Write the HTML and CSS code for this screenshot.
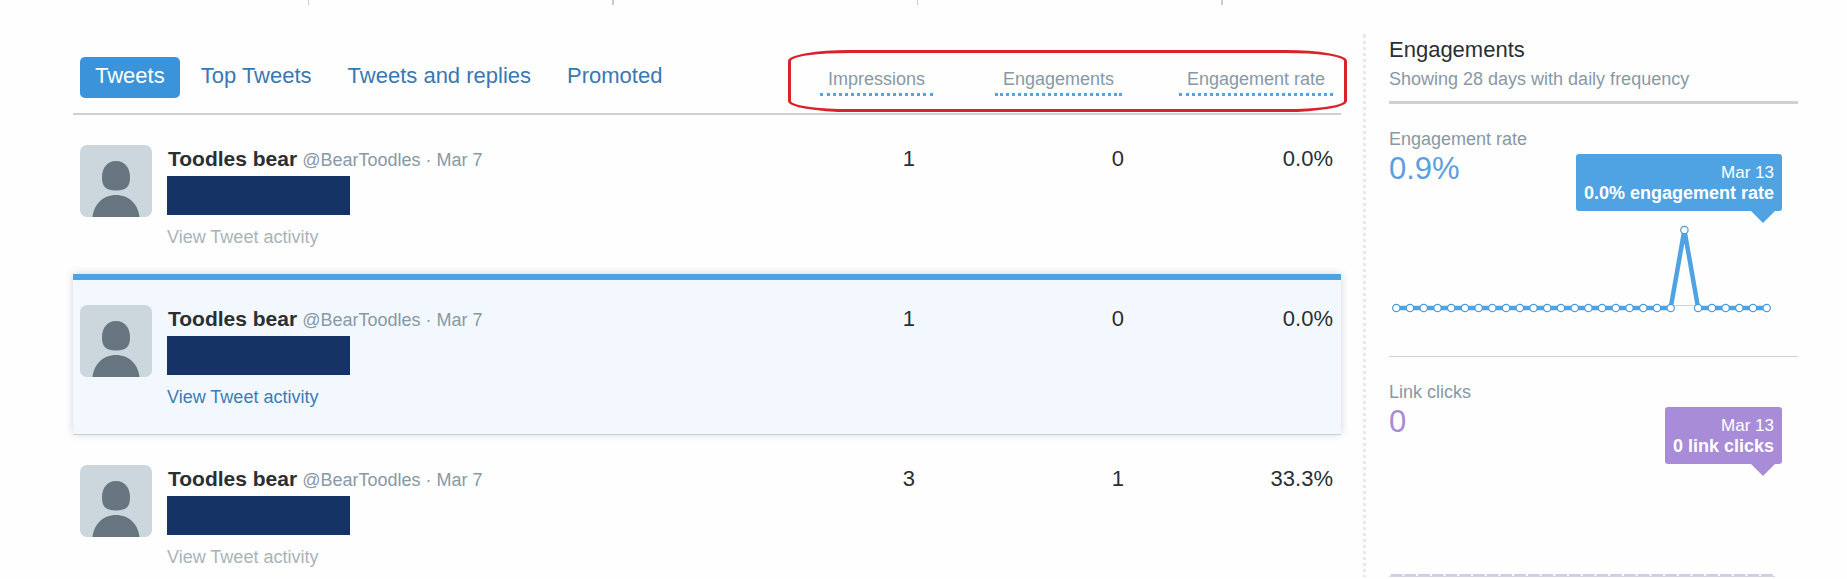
FILE: index.html
```html
<!DOCTYPE html>
<html lang="en">
<head>
    <meta charset="UTF-8">
    <meta name="viewport" content="width=device-width, initial-scale=1.0">
    <title>Tweet activity</title>
    <link rel="stylesheet" href="styles.css">
</head>
<body>
    <svg width="0" height="0" class="defs">
        <symbol id="avatar" viewBox="0 0 72 72">
            <rect width="72" height="72" fill="#ccd6dd"/>
            <path d="M36 16c9 0 14 7 14 16 0 8-2 13.500-14 13.500S22 40 22 32c0-9 5-16 14-16z" fill="#66757f"/>
            <path d="M12.500 72C14 59 23 50 36 50s22 9 23.500 22z" fill="#66757f"/>
        </symbol>
    </svg>

    <div class="page">
        <!-- bottom edge of the summary columns -->
        <div class="summary">
            <span></span><span></span><span></span><span></span><span></span>
        </div>

        <div class="columns">
            <main class="main">
                <table class="tweets">
                    <thead>
                        <tr>
                            <th class="col-tweet">
                                <nav class="tabs">
                                    <a href="#" class="tab active">Tweets</a>
                                    <a href="#" class="tab">Top Tweets</a>
                                    <a href="#" class="tab">Tweets and replies</a>
                                    <a href="#" class="tab">Promoted</a>
                                </nav>
                            </th>
                            <th class="col-impressions"><span class="metric">Impressions</span></th>
                            <th class="col-engagements"><span class="metric">Engagements</span></th>
                            <th class="col-rate"><span class="metric">Engagement rate</span></th>
                        </tr>
                    </thead>
                    <tbody>
                        <tr>
                            <td>
                                <div class="tweet">
                                    <svg class="avatar"><use href="#avatar"/></svg>
                                    <div class="tweet-body">
                                        <div class="byline"><b>Toodles bear</b> <span>@BearToodles · Mar 7</span></div>
                                        <div class="redacted"></div>
                                        <a href="#" class="activity">View Tweet activity</a>
                                    </div>
                                </div>
                            </td>
                            <td class="num impressions">1</td>
                            <td class="num">0</td>
                            <td class="num">0.0%</td>
                        </tr>
                        <tr class="selected">
                            <td>
                                <div class="tweet">
                                    <svg class="avatar"><use href="#avatar"/></svg>
                                    <div class="tweet-body">
                                        <div class="byline"><b>Toodles bear</b> <span>@BearToodles · Mar 7</span></div>
                                        <div class="redacted"></div>
                                        <a href="#" class="activity">View Tweet activity</a>
                                    </div>
                                </div>
                            </td>
                            <td class="num impressions">1</td>
                            <td class="num">0</td>
                            <td class="num">0.0%</td>
                        </tr>
                        <tr>
                            <td>
                                <div class="tweet">
                                    <svg class="avatar"><use href="#avatar"/></svg>
                                    <div class="tweet-body">
                                        <div class="byline"><b>Toodles bear</b> <span>@BearToodles · Mar 7</span></div>
                                        <div class="redacted"></div>
                                        <a href="#" class="activity">View Tweet activity</a>
                                    </div>
                                </div>
                            </td>
                            <td class="num impressions">3</td>
                            <td class="num">1</td>
                            <td class="num">33.3%</td>
                        </tr>
                    </tbody>
                </table>
                <div class="highlight"></div>
            </main>

            <aside class="side">
                <header class="side-header">
                    <h2>Engagements</h2>
                    <p>Showing 28 days with daily frequency</p>
                </header>

                <section class="card blue">
                    <h3>Engagement rate</h3>
                    <div class="value">0.9%</div>
                    <div class="bubble">Mar 13<b>0.0% engagement rate</b></div>
                    <svg class="chart" viewBox="0 0 409 170">
                        <marker id="dot" markerWidth="10" markerHeight="10" refX="5" refY="5" markerUnits="userSpaceOnUse">
                            <circle cx="5" cy="5" r="3.700" fill="#fff" stroke="#4a9bdc" stroke-width="1.200"/>
                        </marker>
                        <path d="M281 120.500h28" stroke="#b5dcf5"/>
                        <polyline fill="none" stroke="#50a3e3" stroke-width="4.500"
                            marker-start="url(#dot)" marker-mid="url(#dot)" marker-end="url(#dot)"
                            points="7.300,123 21,123 34.700,123 48.500,123 62.200,123 75.900,123 89.600,123 103.300,123 117.100,123 130.800,123 144.500,123 158.200,123 171.900,123 185.700,123 199.400,123 213.100,123 226.800,123 240.500,123 254.300,123 268,123 281.700,123 295.400,45 309.100,123 322.900,123 336.600,123 350.300,123 364,123 377.700,123"/>
                    </svg>
                </section>

                <section class="card purple">
                    <h3>Link clicks</h3>
                    <div class="value">0</div>
                    <div class="bubble">Mar 13<b>0 link clicks</b></div>
                    <svg class="chart" viewBox="0 0 409 170">
                        <path d="M1.700 137H386" stroke="#d3cce8" stroke-width="2" stroke-dasharray="11.700 2.020"/>
                        <path d="M0 138.500H386" stroke="#d5d5e2"/>
                    </svg>
                </section>
            </aside>
        </div>
    </div>
</body>
</html>
```

FILE: styles.css
```css
* {
    box-sizing: border-box;
}
body {
    margin: 0;
    background: #fefefe;
    color: #292f33;
    font-family: "Liberation Sans", Arial, sans-serif;
    font-size: 18px;
    line-height: 28px;
    overflow: hidden;
}
a {
    text-decoration: none;
}
h2, h3, p {
    margin: 0;
    font-weight: normal;
}
.defs {
    position: absolute;
}
.page {
    height: calc(100vh - 2px);
    overflow: hidden;
}

/* summary row */
.summary {
    display: grid;
    grid-template-columns: repeat(5, 1fr);
    height: 5px;
    margin: 0 319px 0 4px;
}
.summary span {
    border-right: 1px solid #ccc;
}
.summary span:nth-child(even) {
    border-right-width: 2px;
}
.summary span:last-child {
    border: none;
}

.columns {
    display: flex;
    gap: 22px;
    padding: 0 49px 0 73px;
}
.main {
    position: relative;
    flex: 1;
}

/* tweets table */
.tweets {
    width: 100%;
    border-spacing: 0;
    table-layout: fixed;
}
.tweets th {
    height: 110px;
    padding: 0 8px 15px 0;
    border-bottom: 2px solid #ccd0d2;
    text-align: right;
    vertical-align: bottom;
    font-weight: normal;
}
.tweets .col-tweet {
    padding-left: 7px;
}
.tweets .col-impressions {
    width: 170px;
    padding-right: 10px;
}
.tweets .col-engagements {
    width: 189px;
    padding-right: 10px;
}
.col-rate {
    width: 209px;
}
.tabs {
    display: flex;
    gap: 6px;
}
.tab {
    padding: 6px 15px 9px;
    border-radius: 5px;
    color: #3878b3;
    font-size: 22px;
    line-height: 26px;
    white-space: nowrap;
}
.tab.active {
    background: #3b94d9;
    color: #fff;
}
.metric {
    display: inline-block;
    margin-bottom: 2px;
    padding: 0 8px 3px;
    border-bottom: 3px dotted #55a4e0;
    color: #8899a6;
    line-height: 22px;
    vertical-align: bottom;
}
.tweets td {
    height: 160px;
    padding: 25px 8px 0 7px;
    border-top: 6px solid transparent;
    vertical-align: top;
}
.tweets tbody tr:first-child td {
    height: 159px;
    padding-top: 24px;
}
.tweets .num {
    font-size: 22px;
    line-height: 28px;
    text-align: right;
}
.tweets .impressions {
    padding-right: 28px;
}
.selected {
    box-shadow: 0 1px 0 #c8d0d6, 0 0 8px rgba(40, 50, 90, 0.2);
}
.selected td {
    background: #f3f8fe;
    border-top-color: #50a3e3;
}
.tweet {
    display: flex;
    gap: 15px;
}
.avatar {
    width: 72px;
    height: 72px;
    border-radius: 7px;
}
.byline {
    padding-left: 1px;
    color: #8899a6;
}
.byline b {
    color: #292f33;
    font-size: 21px;
}
.redacted {
    width: 183px;
    height: 39px;
    margin: 2px 0 8px;
    background: #153465;
}
.activity {
    display: block;
    color: #aab3b9;
}
.selected .activity {
    color: #3a7cb8;
}

/* red ring around the metric headings */
.highlight {
    position: absolute;
    top: 45px;
    right: -6px;
    width: 559px;
    height: 62px;
    border: 3px solid #d8232a;
    border-radius: 62px / 11px;
}

/* engagements sidebar */
.side {
    width: 435px;
    margin-top: 29px;
    padding: 1px 0 0 23px;
    border-left: 3px dotted #ede6f1;
}
.side-header {
    padding-bottom: 8px;
    border-bottom: 3px solid #d0d0d2;
    color: #8899a6;
}
.side-header h2 {
    color: #292f33;
    font-size: 22px;
    line-height: 30px;
}
.card {
    position: relative;
    height: 253px;
    padding-top: 21px;
    border-bottom: 1px solid #cfd2da;
}
.card h3 {
    color: #8899a6;
    font-size: 18px;
}
.value {
    font-size: 31px;
    line-height: 32px;
}
.blue .value {
    color: #5c9fe0;
}
.purple .value {
    color: #a78cd5;
}
.bubble {
    position: absolute;
    top: 50px;
    right: 16px;
    padding: 9px 8px 8px;
    border-radius: 3px;
    color: #fff;
    font-size: 17px;
    line-height: 20px;
    text-align: right;
}
.bubble b {
    display: block;
    font-size: 18px;
}
.bubble::after {
    content: "";
    position: absolute;
    top: 100%;
    right: 7px;
    border: 12px solid transparent;
    border-bottom: none;
}
.blue .bubble {
    background: #50a3e3;
}
.blue .bubble::after {
    border-top-color: #50a3e3;
}
.purple .bubble {
    background: #a98cd8;
}
.purple .bubble::after {
    border-top-color: #a98cd8;
}
.chart {
    display: block;
    width: 100%;
}
```
